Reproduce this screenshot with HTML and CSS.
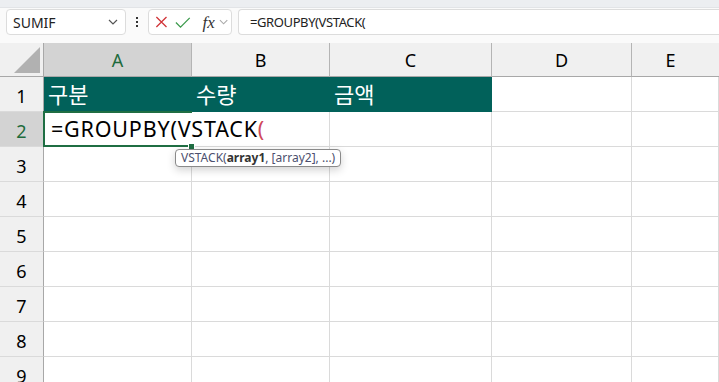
FILE: index.html
```html
<!DOCTYPE html>
<html lang="ko">
<head>
    <meta charset="UTF-8">
    <title>GROUPBY</title>
    <link rel="stylesheet" href="styles.css">
</head>
<body>
    <div class="top-strip"></div>

    <div class="toolbar">
        <div class="name-box">
            <span>SUMIF</span>
            <svg class="chev" width="10" height="6" viewBox="0 0 10 6"><path d="M1 1l4 4 4-4" fill="none" stroke="#555" stroke-width="1.2"/></svg>
        </div>
        <div class="kebab"><i></i><i></i><i></i></div>
        <div class="fx-box">
            <svg width="14" height="14" viewBox="0 0 14 14"><path d="M1.5 1.5l11 11M12.5 1.5l-11 11" stroke="#d13438" stroke-width="1.4"/></svg>
            <svg width="17" height="13" viewBox="0 0 17 13"><path d="M1 6.5l5 5L16 1.5" fill="none" stroke="#3c9a4c" stroke-width="1.4"/></svg>
            <span class="fx">fx</span>
            <svg width="10" height="6" viewBox="0 0 10 6"><path d="M1 1l4 4 4-4" fill="none" stroke="#aaa" stroke-width="1.2"/></svg>
        </div>
        <div class="formula">=GROUPBY(VSTACK(</div>
    </div>

    <div class="sheet">
        <div class="corner"><div class="tri"></div></div>
        <div class="col-head sel">A</div>
        <div class="col-head">B</div>
        <div class="col-head">C</div>
        <div class="col-head">D</div>
        <div class="col-head last">E</div>

        <div class="row-head">1</div>
        <div class="cell head-fill">구분</div>
        <div class="cell head-fill">수량</div>
        <div class="cell head-fill">금액</div>
        <div class="cell"></div>
        <div class="cell"></div>

        <div class="row-head sel">2</div>
        <div class="cell active">
            <span class="edit">=GROUPBY(VSTACK<span class="paren">(</span></span>
            <span class="handle"></span>
            <div class="tip">VSTACK(<b>array1</b>, [array2], ...)</div>
        </div>
        <div class="cell"></div>
        <div class="cell"></div>
        <div class="cell"></div>
        <div class="cell"></div>

        <div class="row-head">3</div>
        <div class="cell"></div><div class="cell"></div><div class="cell"></div><div class="cell"></div><div class="cell"></div>
        <div class="row-head">4</div>
        <div class="cell"></div><div class="cell"></div><div class="cell"></div><div class="cell"></div><div class="cell"></div>
        <div class="row-head">5</div>
        <div class="cell"></div><div class="cell"></div><div class="cell"></div><div class="cell"></div><div class="cell"></div>
        <div class="row-head">6</div>
        <div class="cell"></div><div class="cell"></div><div class="cell"></div><div class="cell"></div><div class="cell"></div>
        <div class="row-head">7</div>
        <div class="cell"></div><div class="cell"></div><div class="cell"></div><div class="cell"></div><div class="cell"></div>
        <div class="row-head">8</div>
        <div class="cell"></div><div class="cell"></div><div class="cell"></div><div class="cell"></div><div class="cell"></div>
        <div class="row-head">9</div>
        <div class="cell"></div><div class="cell"></div><div class="cell"></div><div class="cell"></div><div class="cell"></div>
    </div>
</body>
</html>
```

FILE: styles.css
```css
body {
    margin: 0;
    width: 719px;
    height: 382px;
    overflow: hidden;
    font-family: "Noto Sans", "Noto Sans CJK KR", sans-serif;
    background: #fff;
    color: #000;
}

.top-strip {
    height: 7px;
    background: #eceef1;
    border-bottom: 1px solid #e2e4e7;
}

/* barra de fórmulas */
.toolbar {
    height: 35px;
    box-sizing: border-box;
    padding: 1px 0 0 6px;
    display: flex;
    align-items: flex-start;
    background: #fafafa;
}

.name-box {
    width: 120px;
    height: 26px;
    box-sizing: border-box;
    border: 1px solid #dcdcdc;
    border-radius: 4px;
    background: #fff;
    display: flex;
    align-items: center;
    justify-content: space-between;
    padding: 0 7px 0 6px;
    font-size: 14px;
    color: #222;
}

.kebab {
    width: 22px;
    height: 26px;
    display: flex;
    flex-direction: column;
    align-items: center;
    justify-content: center;
    gap: 2px;
}

.kebab i {
    width: 2px;
    height: 2px;
    background: #333;
}

.fx-box {
    width: 84px;
    height: 26px;
    box-sizing: border-box;
    border: 1px solid #dcdcdc;
    border-radius: 4px;
    background: #fff;
    display: flex;
    align-items: center;
    padding: 0 3px 0 6px;
    gap: 7px;
}

.fx {
    font-family: "Liberation Serif", serif;
    font-style: italic;
    font-size: 17px;
    color: #333;
    margin-left: 5px;
    margin-right: -3px;
    line-height: 1;
}

.formula {
    flex: 1;
    margin-left: 6px;
    height: 26px;
    box-sizing: border-box;
    border: 1px solid #dcdcdc;
    border-right: none;
    border-radius: 4px 0 0 4px;
    background: #fff;
    padding-left: 11px;
    font-size: 13px;
    letter-spacing: -0.4px;
    line-height: 24px;
    color: #222;
}

/* planilha */
.sheet {
    display: grid;
    grid-template-columns: 44px 148px 138px 162px 140px 1fr;
    grid-template-rows: 34px repeat(9, 35px);
    background: #fff;
}

.corner {
    background: #f0f0f0;
    border-right: 1px solid #a8a8a8;
    border-bottom: 1px solid #a8a8a8;
    box-sizing: border-box;
    position: relative;
}

.tri {
    position: absolute;
    right: 3px;
    bottom: 3px;
    width: 0;
    height: 0;
    border-left: 26px solid transparent;
    border-bottom: 26px solid #b1b1b1;
}

.col-head {
    background: #f0f0f0;
    border-right: 1px solid #b4b4b4;
    border-bottom: 1px solid #a8a8a8;
    box-sizing: border-box;
    display: flex;
    align-items: center;
    justify-content: center;
    font-size: 18px;
}

.col-head.sel {
    background: #d3d3d3;
    color: #1e6b3c;
}

.col-head.last {
    border-right: none;
    padding-right: 10px;
}

.row-head {
    background: #f0f0f0;
    border-right: 1px solid #a8a8a8;
    border-bottom: 1px solid #dadada;
    box-sizing: border-box;
    display: flex;
    align-items: center;
    justify-content: center;
    padding-top: 3px;
    font-size: 18px;
}

.row-head.sel {
    background: #d3d3d3;
    color: #1e6b3c;
}

.cell {
    border-right: 1px solid #dadada;
    border-bottom: 1px solid #dadada;
    box-sizing: border-box;
    position: relative;
}

.head-fill {
    background: #01615a;
    border-color: #01615a;
    color: #fff;
    font-family: "Noto Sans CJK KR", sans-serif;
    font-size: 22px;
    line-height: 33px;
    padding-left: 4px;
}

.active {
    z-index: 2;
    white-space: nowrap;
    font-size: 21.5px;
    letter-spacing: 0.8px;
    line-height: 31px;
    padding: 1px 0 0 2px;
}

/* borda verde da célula ativa, fica atrás do editor */
.active::before {
    content: "";
    position: absolute;
    left: -1px;
    top: -1px;
    right: -1px;
    bottom: -1px;
    border: 2px solid #1f6e43;
    z-index: 0;
}

.edit {
    position: relative;
    z-index: 1;
    display: inline-block;
    background: #fff;
    padding: 0 1px 0 5px;
}

.paren {
    color: #d0485a;
}

.handle {
    position: absolute;
    right: -4px;
    bottom: -4px;
    width: 5px;
    height: 5px;
    background: #1f6e43;
    border: 1px solid #fff;
    z-index: 1;
}

.tip {
    position: absolute;
    left: 131px;
    top: 37px;
    height: 18px;
    box-sizing: border-box;
    padding: 0 5px;
    border: 1px solid #8a8a8a;
    border-radius: 4px;
    background: #fff;
    box-shadow: 0 3px 8px rgba(0, 0, 0, 0.18);
    font-size: 12px;
    letter-spacing: 0;
    line-height: 16px;
    color: #4b4f6e;
    z-index: 2;
}

.tip b {
    color: #333;
}
```
